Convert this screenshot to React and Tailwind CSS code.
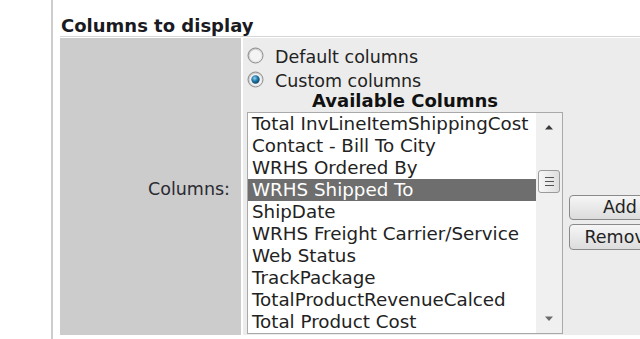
import React from 'react';

const items = [
  'Total InvLineItemShippingCost',
  'Contact - Bill To City',
  'WRHS Ordered By',
  'WRHS Shipped To',
  'ShipDate',
  'WRHS Freight Carrier/Service',
  'Web Status',
  'TrackPackage',
  'TotalProductRevenueCalced',
  'Total Product Cost',
];

function Radio({ checked }) {
  return (
    <svg width="17" height="17" viewBox="0 0 17 17" className="shrink-0">
      <defs>
        <linearGradient id={checked ? 'rc' : 'ru'} x1="0" y1="0" x2="1" y2="1">
          <stop offset="0" stopColor="#bdbdbd" />
          <stop offset="1" stopColor="#f5f5f5" />
        </linearGradient>
        <radialGradient id="dot" cx="0.4" cy="0.35" r="0.7">
          <stop offset="0" stopColor="#9ad4f0" />
          <stop offset="0.5" stopColor="#1f78a8" />
          <stop offset="1" stopColor="#0d3f63" />
        </radialGradient>
      </defs>
      <circle cx="8.5" cy="8.5" r="7.5" fill={`url(#${checked ? 'rc' : 'ru'})`} stroke="#8c8c8c" strokeWidth="1" />
      <circle cx="8.5" cy="8.5" r="5.8" fill="#f4f4f4" />
      {checked && <circle cx="8.5" cy="8.5" r="4.2" fill="url(#dot)" />}
    </svg>
  );
}

export default function App() {
  return (
    <div className="w-[640px] h-[339px] overflow-hidden bg-white flex text-[#222] font-['DejaVu_Sans',Verdana,sans-serif]">
      <div className="w-[51px] shrink-0" />
      <div className="w-[2px] shrink-0 bg-[#cdcdcd]" />
      <div className="flex-1 pl-[7px] min-w-0">
        <div className="h-[37px] border-b border-[#d6d6d6] pt-[16px] pl-[1px] text-[18px] leading-[20px] font-bold text-[#1a1a22] whitespace-nowrap">
          Columns to display
        </div>
        <div className="flex gap-[2px] mt-[1px]">
          <div className="w-[181px] shrink-0 bg-[#cccccc] flex items-center justify-end pr-[11px] pt-[6px] text-[17.5px] text-[#2a2a33]">
            Columns:
          </div>
          <div className="flex-1 bg-[#ececec] pl-[4px] pt-[7px] pb-[1px] text-[17.5px] whitespace-nowrap">
            <div className="flex items-center h-[24px] leading-[24px]">
              <div className="-mt-[4px]"><Radio /></div>
              <span className="ml-[11px]">Default columns</span>
            </div>
            <div className="flex items-center h-[24px] leading-[24px]">
              <div className="-mt-[4px]"><Radio checked /></div>
              <span className="ml-[11px]">Custom columns</span>
            </div>
            <div className="w-[316px] text-center font-bold text-[18px] leading-[16px] h-[16px] text-[#111]">
              Available Columns
            </div>
            <div className="flex items-center mt-[3px]">
              <div className="w-[316px] h-[222px] border border-[#a9a9a9] bg-white flex shrink-0">
                <div className="flex-1 flex flex-col text-[18.3px]">
                  {items.map((it, i) => (
                    <div
                      key={it}
                      className={`h-[22px] leading-[22px] pl-[4px] ${i === 3 ? 'bg-[#6e6e6e] text-white' : ''}`}
                    >
                      {it}
                    </div>
                  ))}
                </div>
                <div className="w-[26px] bg-[#f0f0f0] flex flex-col items-center">
                  <svg width="10" height="6" viewBox="0 0 10 6" className="mt-[11px]">
                    <path d="M1 5.5 L5 1 L9 5.5 Z" fill="#3a3a3a" />
                  </svg>
                  <div className="mt-[40px] w-[22px] h-[23px] rounded-[3px] border border-[#9a9a9a] bg-gradient-to-r from-[#f7f7f7] to-[#dedede] flex flex-col items-center justify-center gap-[3px]">
                    <div className="w-[9px] h-[1px] bg-[#555]" />
                    <div className="w-[9px] h-[1px] bg-[#555]" />
                    <div className="w-[9px] h-[1px] bg-[#555]" />
                  </div>
                  <div className="flex-1" />
                  <svg width="10" height="6" viewBox="0 0 10 6" className="mb-[11px]">
                    <path d="M1 0.5 L5 5 L9 0.5 Z" fill="#6a6a6a" />
                  </svg>
                </div>
              </div>
              <div className="ml-[6px] flex flex-col gap-[4px] -mt-[2px]">
                <div className="w-[102px] h-[25px] rounded-[4px] border border-[#8a8a8a] bg-gradient-to-b from-[#f6f6f6] to-[#dcdcdc] text-center leading-[23px]">
                  Add
                </div>
                <div className="w-[102px] h-[26px] rounded-[4px] border border-[#8a8a8a] bg-gradient-to-b from-[#f6f6f6] to-[#dcdcdc] text-center leading-[24px]">
                  Remove
                </div>
              </div>
            </div>
          </div>
        </div>
      </div>
    </div>
  );
}
